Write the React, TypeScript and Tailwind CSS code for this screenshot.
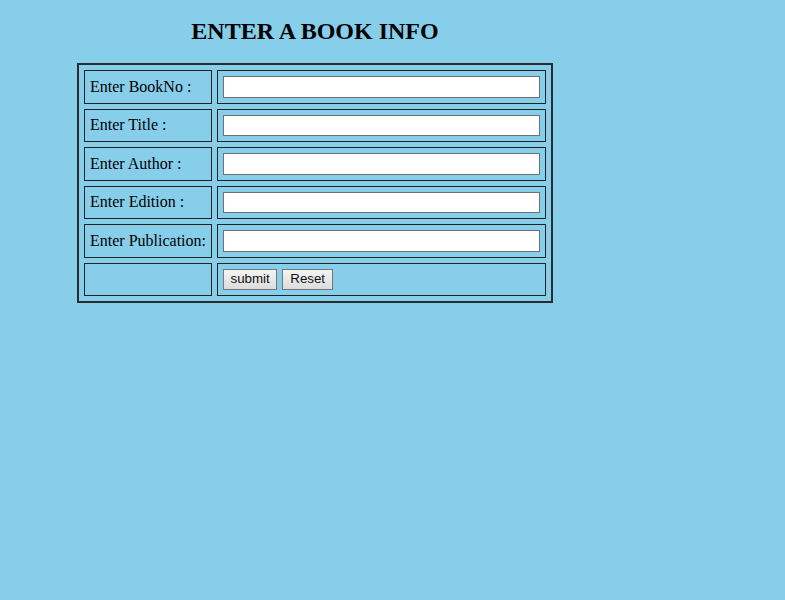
export default function App() {
  const fields = ['Enter BookNo :', 'Enter Title :', 'Enter Author :', 'Enter Edition :', 'Enter Publication:'];

  return (
    <main className="min-h-screen bg-[#87ceeb] text-black font-['Liberation_Serif',serif] pt-[18px]">
      <div className="w-[476px] ml-[77px]">
        <h2 className="text-center text-[24px] font-bold leading-[27px] mb-[18px]">ENTER A BOOK INFO</h2>
        <table className="border-2 border-[#2b2b2b] border-separate border-spacing-[5px] text-[16px] leading-[20px]">
          <tbody>
            {fields.map((label) => (
              <tr key={label}>
                <td className="border border-[#222] p-[5px] whitespace-nowrap">{label}</td>
                <td className="border border-[#222] p-[5px]">
                  <input
                    type="text"
                    className="block w-[317px] h-[21.5px] bg-white border border-[#6f6f6f] outline-none"
                  />
                </td>
              </tr>
            ))}
            <tr>
              <td className="border border-[#222] p-[5px]"></td>
              <td className="border border-[#222] p-[5px]">
                <div className="flex gap-[5px] font-['Liberation_Sans',sans-serif] text-[13.33px] leading-[16px] text-[#111]">
                  <button type="submit" className="h-[21.5px] px-[6.5px] border border-[#767676] bg-gradient-to-b from-[#f4f4f4] to-[#dcdcdc]">
                    submit
                  </button>
                  <button type="reset" className="h-[21.5px] px-[7px] border border-[#767676] bg-gradient-to-b from-[#f4f4f4] to-[#dcdcdc]">
                    Reset
                  </button>
                </div>
              </td>
            </tr>
          </tbody>
        </table>
      </div>
    </main>
  );
}
